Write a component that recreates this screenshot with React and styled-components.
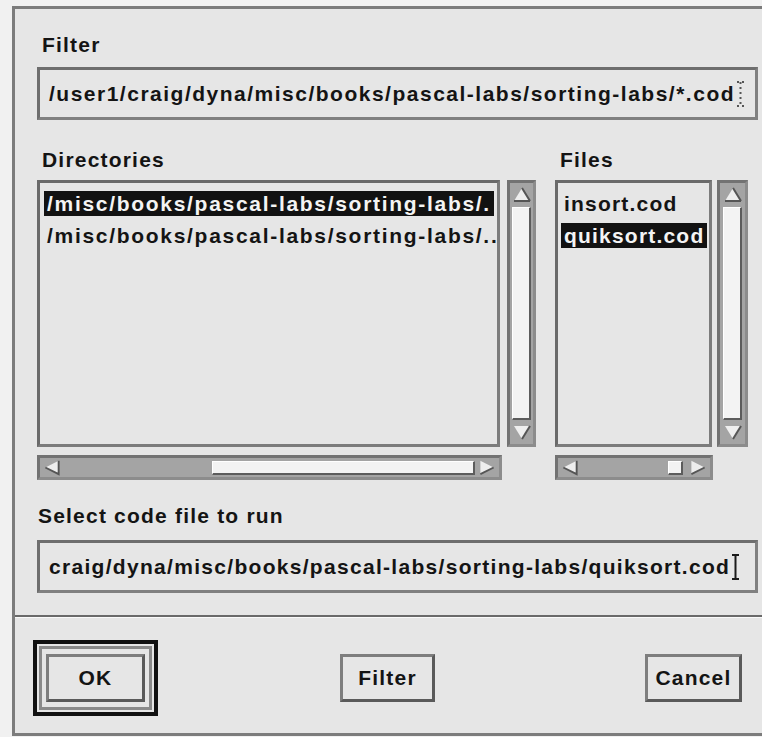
import styled, { createGlobalStyle } from 'styled-components';

const GlobalStyle = createGlobalStyle`
	html, body {
		margin: 0;
		padding: 0;
		background: #f1f1f1;
		overflow: hidden;
	}
`;

const Dialog = styled.div`
	margin: 6px 0 0 12px;
	width: 760px;
	height: 730px;
	box-sizing: border-box;
	border: 3px solid #7c7c7c;
	border-right: none;
	background: #e6e6e6;
	display: flex;
	flex-direction: column;
	color: #141414;
	font: bold 21px 'Liberation Sans', Arial, sans-serif;
	letter-spacing: 1.2px;
`;

const WorkArea = styled.div`
	display: flex;
	flex-direction: column;
	padding: 24px 14px 0 22px;
`;

const Label = styled.div`
	line-height: 24px;
	height: 24px;
	padding-left: ${(p) => p.$indent ?? 5}px;
	margin-top: ${(p) => p.$top ?? 0}px;
	white-space: nowrap;
`;

const TextField = styled.div`
	height: 53px;
	box-sizing: border-box;
	margin-top: ${(p) => p.$top}px;
	border: 3px solid #808080;
	border-top-color: #6e6e6e;
	border-left-color: #6e6e6e;
	padding: 0 9px;
	display: flex;
	align-items: center;
	white-space: nowrap;
	overflow: hidden;
	line-height: 26px;
	letter-spacing: ${(p) => p.$spacing}px;
`;

const Lists = styled.div`
	display: flex;
	gap: 19px;
	margin-top: 28px;
`;

const Column = styled.div`
	display: flex;
	flex-direction: column;
	width: ${(p) => p.$width}px;
`;

const ListRow = styled.div`
	display: flex;
	gap: ${(p) => p.$gap}px;
	height: 267px;
	margin-top: 8px;
`;

const ListBox = styled.div`
	flex: 1;
	box-sizing: border-box;
	border: 3px solid #7c7c7c;
	border-top-color: #6a6a6a;
	border-left-color: #6a6a6a;
	padding: 8px ${(p) => p.$pad}px;
	overflow: hidden;
	display: flex;
	flex-direction: column;
	gap: 7px;
	letter-spacing: ${(p) => p.$spacing}px;
`;

const Item = styled.div`
	width: fit-content;
	padding: 0 3px;
	line-height: 25px;
	white-space: nowrap;
	background: ${(p) => (p.$selected ? '#121212' : 'transparent')};
	color: ${(p) => (p.$selected ? '#f4f4f4' : 'inherit')};
`;

const VScroll = styled.div`
	width: ${(p) => p.$width}px;
	box-sizing: border-box;
	border: 3px solid #727272;
	border-bottom-color: #8c8c8c;
	border-right-color: #8c8c8c;
	background: #a4a4a4;
	display: flex;
	flex-direction: column;
	align-items: center;
	padding: 2px 0;
	gap: 2px;
`;

const VThumb = styled.div`
	flex: 1;
	width: 16px;
	background: #f3f3f3;
	border-top: 1px solid #ffffff;
	border-left: 1px solid #ffffff;
	border-right: 2px solid #5c5c5c;
	border-bottom: 2px solid #5c5c5c;
`;

const HScroll = styled.div`
	width: ${(p) => p.$width}px;
	height: 25px;
	margin-top: 8px;
	box-sizing: border-box;
	border: 3px solid #727272;
	border-bottom-color: #8c8c8c;
	border-right-color: #8c8c8c;
	background: #a4a4a4;
	display: flex;
	align-items: center;
	padding: 0 2px;
	gap: 2px;
`;

const Trough = styled.div`
	flex: 1;
	height: 100%;
	display: flex;
	align-items: center;
`;

const HThumb = styled.div`
	margin-left: ${(p) => p.$at}%;
	width: ${(p) => p.$size}%;
	height: 14px;
	box-sizing: border-box;
	background: #f3f3f3;
	border-top: 1px solid #ffffff;
	border-left: 1px solid #ffffff;
	border-right: 2px solid #5c5c5c;
	border-bottom: 2px solid #5c5c5c;
`;

const Separator = styled.div`
	margin-top: 22px;
	border-top: 2px solid #6a6a6a;
	border-bottom: 1px solid #fafafa;
`;

const ButtonRow = styled.div`
	flex: 1;
	display: flex;
	align-items: center;
	padding: 4px 30px 0 18px;
`;

const DefaultRing = styled.div`
	border: 4px solid #111111;
	padding: 2px;
`;

const DefaultInner = styled.div`
	border: 3px solid #8a8a8a;
	padding: 5px 4px;
`;

const Button = styled.button`
	width: ${(p) => p.$width}px;
	height: 48px;
	box-sizing: border-box;
	margin-left: ${(p) => p.$left ?? 0};
	border: 3px solid #7e7e7e;
	border-right-color: #5a5a5a;
	border-bottom-color: #5a5a5a;
	background: #e6e6e6;
	color: #141414;
	font: inherit;
	letter-spacing: inherit;
	padding: 0;
	cursor: pointer;
`;

const Arrow = ({ dir }) => {
	const shapes = {
		up: { fill: '3,16 11,3 19,16', dark: 'M19 16 L3 16 M19 16 L11 3' },
		down: { fill: '3,4 19,4 11,17', dark: 'M19 4 L11 17' },
		left: { fill: '3,10 17,3 17,17', dark: 'M17 3 L17 17 L3 10' },
		right: { fill: '3,3 17,10 3,17', dark: 'M17 10 L3 17' },
	};
	const s = shapes[dir];
	const vertical = dir === 'up' || dir === 'down';
	return (
		<svg width={vertical ? 22 : 20} height={vertical ? 20 : 19} viewBox={vertical ? '0 0 22 20' : '0 0 20 20'}>
			<polygon points={s.fill} fill="#eeeeee" />
			<path d={s.dark} stroke="#555555" strokeWidth="2" fill="none" />
		</svg>
	);
};

const Caret = ({ dim }) => (
	<svg width="9" height="28" viewBox="0 0 9 28" style={{ flex: 'none', marginLeft: 1 }}>
		<path
			d="M1 2 H8 M4.5 2 V26 M1 26 H8"
			stroke={dim ? '#555555' : '#1a1a1a'}
			strokeWidth="2"
			strokeDasharray={dim ? '2 3' : undefined}
			fill="none"
		/>
	</svg>
);

const dirs = ['/misc/books/pascal-labs/sorting-labs/.', '/misc/books/pascal-labs/sorting-labs/..'];

const files = ['insort.cod', 'quiksort.cod'];

const App = () => {
	return (
		<>
			<GlobalStyle />
			<Dialog>
				<WorkArea>
					<Label>Filter</Label>
					<TextField $top={10} $spacing={1.5}>
						/user1/craig/dyna/misc/books/pascal-labs/sorting-labs/*.cod
						<Caret dim />
					</TextField>

					<Lists>
						<Column $width={499}>
							<Label>Directories</Label>
							<ListRow $gap={7}>
								<ListBox $pad={4} $spacing={1.7}>
									{dirs.map((d, i) => (
										<Item key={d} $selected={i === 0}>
											{d}
										</Item>
									))}
								</ListBox>
								<VScroll $width={29}>
									<Arrow dir="up" />
									<VThumb />
									<Arrow dir="down" />
								</VScroll>
							</ListRow>
							<HScroll $width={465}>
								<Arrow dir="left" />
								<Trough>
									<HThumb $at={36} $size={64} />
								</Trough>
								<Arrow dir="right" />
							</HScroll>
						</Column>

						<Column $width={193}>
							<Label>Files</Label>
							<ListRow $gap={5}>
								<ListBox $pad={3} $spacing={1.2}>
									{files.map((f) => (
										<Item key={f} $selected={f === 'quiksort.cod'}>
											{f}
										</Item>
									))}
								</ListBox>
								<VScroll $width={31}>
									<Arrow dir="up" />
									<VThumb />
									<Arrow dir="down" />
								</VScroll>
							</ListRow>
							<HScroll $width={158}>
								<Arrow dir="left" />
								<Trough>
									<HThumb $at={83} $size={14} />
								</Trough>
								<Arrow dir="right" />
							</HScroll>
						</Column>
					</Lists>

					<Label $top={24} $indent={1}>
						Select code file to run
					</Label>
					<TextField $top={12} $spacing={1.3}>
						craig/dyna/misc/books/pascal-labs/sorting-labs/quiksort.cod
						<Caret />
					</TextField>
				</WorkArea>

				<Separator />

				<ButtonRow>
					<DefaultRing>
						<DefaultInner>
							<Button $width={99}>OK</Button>
						</DefaultInner>
					</DefaultRing>
					<Button $width={95} $left="182px">
						Filter
					</Button>
					<Button $width={97} $left="auto">
						Cancel
					</Button>
				</ButtonRow>
			</Dialog>
		</>
	);
};

export default App;
